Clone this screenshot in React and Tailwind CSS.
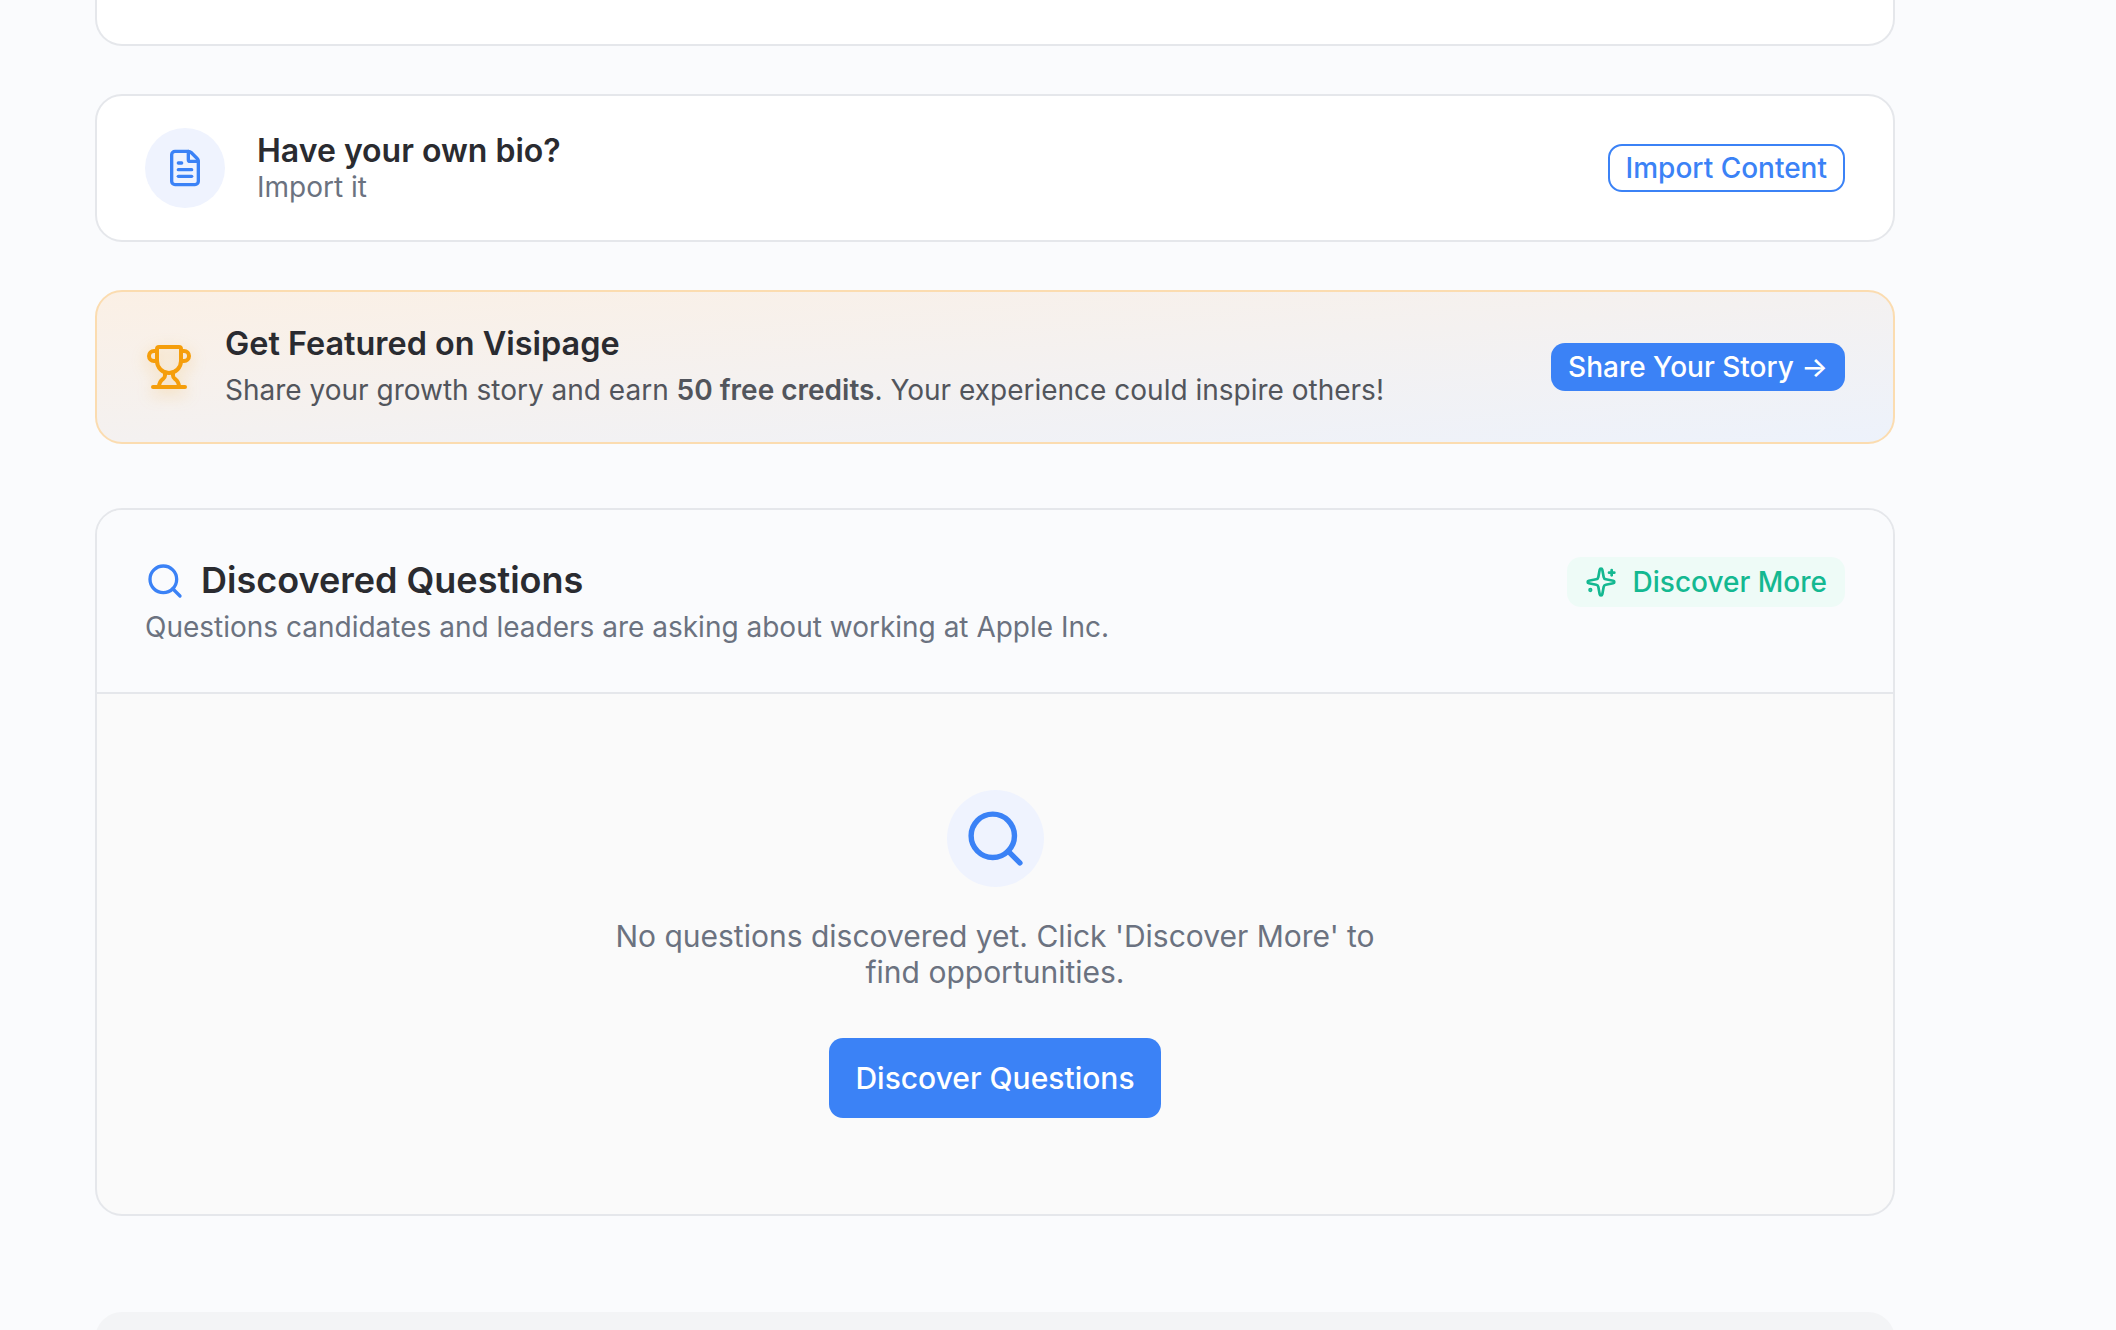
import React from "react";
import { FileText, Trophy, Search } from "lucide-react";

// lucide's star with the plus and the dot moved to where the picture has them
const SparkleIcon = () => (
  <svg width="32" height="32" viewBox="0 0 24 24" fill="none" stroke="currentColor" strokeWidth="2" strokeLinecap="round" strokeLinejoin="round">
    <path d="M11.017 2.814a1 1 0 0 1 1.966 0l1.051 5.558a2 2 0 0 0 1.594 1.594l5.558 1.051a1 1 0 0 1 0 1.966l-5.558 1.051a2 2 0 0 0-1.594 1.594l-1.051 5.558a1 1 0 0 1-1.966 0l-1.051-5.558a2 2 0 0 0-1.594-1.594l-5.558-1.051a1 1 0 0 1 0-1.966l5.558-1.051a2 2 0 0 0 1.594-1.594z" />
    <path d="M20 3v4" />
    <path d="M22 5h-4" />
    <circle cx="4" cy="18" r="0.6" fill="currentColor" />
  </svg>
);

const App = () => {
  return (
    <div className="h-[1330px] overflow-hidden bg-[#fafbfd] font-['Inter',sans-serif]">
      <div className="ml-[95px] flex w-[1800px] flex-col">
        {/* --- cut off card at the top --- */}
        <div className="h-[46px] rounded-b-[27px] border-x-2 border-b-2 border-[#e5e7eb] bg-white" />

        {/* --- import bio --- */}
        <div className="mt-[48px] flex h-[148px] items-center justify-between rounded-[27px] border-2 border-[#e5e7eb] bg-white pl-[48px] pr-[48px]">
          <div className="flex items-center gap-[32px]">
            <div className="flex h-[80px] w-[80px] items-center justify-center rounded-full bg-[#eff3fe]">
              <FileText size={40} strokeWidth={2} className="text-[#3b82f6]" />
            </div>
            <div className="flex flex-col">
              <h3 className="text-[32px] leading-[37px] font-semibold text-[#2a2b30]">Have your own bio?</h3>
              <p className="text-[28px] leading-[36px] text-[#6b7280]">Import it</p>
            </div>
          </div>
          <button className="h-[48px] rounded-[14px] border-2 border-[#3b82f6] bg-white px-[16px] text-[28px] font-medium text-[#3b82f6]">
            Import Content
          </button>
        </div>

        {/* --- featured banner --- */}
        <div className="mt-[48px] flex h-[154px] items-center justify-between rounded-[27px] border-2 border-[#fbdcb0] bg-gradient-to-br from-[#fbf0e5] to-[#edf2fb] pl-[48px] pr-[48px]">
          <div className="flex items-center gap-[32px]">
            <Trophy size={48} strokeWidth={2} className="text-[#f59e0b] drop-shadow-[0_5px_8px_rgba(245,158,11,0.3)]" />
            <div className="flex flex-col">
              <h3 className="text-[32.4px] leading-[46px] font-semibold text-[#2a2b30]">Get Featured on Visipage</h3>
              <p className="text-[28px] leading-[46px] text-[#52555c]">
                Share your growth story and earn <span className="font-semibold">50 free credits</span>. Your experience could inspire others!
              </p>
            </div>
          </div>
          <button className="h-[48px] rounded-[14px] bg-[#3b82f6] px-[17px] text-[28px] font-medium text-white">
            Share Your Story →
          </button>
        </div>

        {/* --- discovered questions --- */}
        <section className="mt-[64px] flex h-[708px] flex-col overflow-hidden rounded-[27px] border-2 border-[#e5e7eb] bg-[#fafafa]">
          <div className="flex h-[184px] items-start justify-between border-b-2 border-[#e5e7eb] bg-[#fafbfd] pl-[48px] pr-[48px] pt-[47px]">
            <div className="flex flex-col">
              <div className="flex items-center gap-[16px]">
                <Search size={40} strokeWidth={2} className="text-[#3b82f6]" />
                <h2 className="text-[36px] leading-[47px] font-semibold text-[#2a2b30]">Discovered Questions</h2>
              </div>
              <p className="mt-[1px] text-[28px] leading-[44px] text-[#6b7280]">
                Questions candidates and leaders are asking about working at Apple Inc.
              </p>
            </div>
            <button className="flex h-[50px] items-center gap-[16px] rounded-[14px] bg-[#eefbf7] pl-[18px] pr-[18px] text-[28px] font-medium text-[#14b891]">
              <SparkleIcon />
              Discover More
            </button>
          </div>

          <div className="flex flex-1 flex-col items-center pt-[96px]">
            <div className="flex h-[97px] w-[97px] items-center justify-center rounded-full bg-[#eff3fe]">
              <Search size={65} strokeWidth={2} className="text-[#3b82f6]" />
            </div>
            <p className="mt-[31px] w-[780px] text-center text-[30px] leading-[36px] text-[#6b7280]">
              No questions discovered yet. Click 'Discover More' to find opportunities.
            </p>
            <button className="mt-[48px] h-[80px] w-[332px] rounded-[14px] bg-[#3b82f6] text-[30px] font-medium text-white">
              Discover Questions
            </button>
          </div>
        </section>

        {/* --- next card, cut off by the window --- */}
        <div className="mt-[96px] h-[60px] shrink-0 rounded-t-[27px] bg-[#f3f4f6]" />
      </div>
    </div>
  );
};

export default App;
